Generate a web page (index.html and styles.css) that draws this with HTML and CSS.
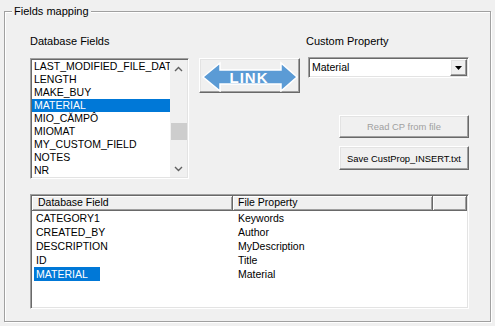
FILE: index.html
```html
<!DOCTYPE html>
<html>
<head>
<meta charset="utf-8">
<title>Fields mapping</title>
<link rel="stylesheet" href="styles.css">
</head>
<body>
<fieldset class="group">
  <legend class="group-title">Fields mapping</legend>
  <div class="group-body">
    <div class="top">
      <div class="col-left">
        <div class="label">Database Fields</div>
        <div class="listbox sunken">
          <ul class="items">
            <li>LAST_MODIFIED_FILE_DATE</li>
            <li>LENGTH</li>
            <li>MAKE_BUY</li>
            <li class="sel">MATERIAL</li>
            <li>MIO_CĂMPÔ</li>
            <li>MIOMAT</li>
            <li>MY_CUSTOM_FIELD</li>
            <li>NOTES</li>
            <li>NR</li>
          </ul>
          <div class="vscroll">
            <div class="sb-arrow"><svg width="9" height="6" viewBox="0 0 9 6"><polyline points="1,5 4.5,1.5 8,5" fill="none" stroke="#606060" stroke-width="1.4"/></svg></div>
            <div class="sb-track"><div class="sb-thumb"></div></div>
            <div class="sb-arrow"><svg width="9" height="6" viewBox="0 0 9 6"><polyline points="1,1 4.5,4.5 8,1" fill="none" stroke="#606060" stroke-width="1.4"/></svg></div>
          </div>
        </div>
      </div>
      <div class="col-mid">
        <button class="link-btn raised" type="button">
          <svg class="link-svg" width="99" height="33" viewBox="1 1 99 33">
            <path d="M4 19 L21 5 L21 12 L82 12 L82 5 L98 19 L82 33 L82 26 L21 26 L21 33 Z" fill="#5b9bd5" stroke="#ffffff" stroke-width="1.5" stroke-linejoin="miter"/>
            <text x="50" y="24.5" text-anchor="middle" class="link-text">LINK</text>
          </svg>
        </button>
      </div>
      <div class="col-right">
        <div class="label">Custom Property</div>
        <div class="combo sunken">
          <span class="combo-text">Material</span>
          <span class="combo-btn raised"><svg width="7" height="4" viewBox="0 0 7 4"><polygon points="0,0 7,0 3.5,4" fill="#000"/></svg></span>
        </div>
        <button class="btn raised btn-read" type="button">Read CP from file</button>
        <button class="btn raised btn-save" type="button">Save CustProp_INSERT.txt</button>
      </div>
    </div>
    <div class="listview sunken">
      <div class="lv-header">
        <div class="lv-h c1">Database Field</div>
        <div class="lv-h c2">File Property</div>
        <div class="lv-h c3"></div>
      </div>
      <div class="lv-rows">
        <div class="lv-row"><span class="c1"><span class="cell">CATEGORY1</span></span><span class="c2">Keywords</span></div>
        <div class="lv-row"><span class="c1"><span class="cell">CREATED_BY</span></span><span class="c2">Author</span></div>
        <div class="lv-row"><span class="c1"><span class="cell">DESCRIPTION</span></span><span class="c2">MyDescription</span></div>
        <div class="lv-row"><span class="c1"><span class="cell">ID</span></span><span class="c2">Title</span></div>
        <div class="lv-row sel"><span class="c1"><span class="cell">MATERIAL</span></span><span class="c2">Material</span></div>
      </div>
    </div>
  </div>
</fieldset>
</body>
</html>
```

FILE: styles.css
```css
html, body {
  margin: 0;
  padding: 0;
}
body {
  background: #f0f0f0;
  font-family: "Liberation Sans", Arial, sans-serif;
  font-size: 11px;
  color: #000;
  width: 495px;
  height: 326px;
  overflow: hidden;
}

.group {
  margin: 4px 0 0 4px;
  padding: 0;
  width: 487px;
  box-sizing: border-box;
  border: 1px solid #a0a0a0;
  box-shadow: inset 1px 1px 0 #fff, 1px 1px 0 #fff;
  min-width: 0;
}
.group-title {
  margin-left: 7px;
  padding: 0 2px;
  line-height: 15px;
  font-size: 11px;
  background: #f0f0f0;
}
.group-body {
  padding: 16px 0 12px 25px;
}

.top {
  display: flex;
  align-items: flex-start;
}
.label {
  line-height: 13px;
  height: 13px;
  white-space: nowrap;
}

.sunken {
  border: 1px solid;
  border-color: #a0a0a0 #fff #fff #a0a0a0;
  box-shadow: inset 1px 1px 0 #696969, inset -1px -1px 0 #e3e3e3;
  padding: 1px;
  background: #fff;
  box-sizing: border-box;
}
.raised {
  border: 1px solid;
  border-color: #fff #696969 #696969 #fff;
  box-shadow: inset -1px -1px 0 #a0a0a0, inset 1px 1px 0 #e3e3e3;
  background: #f0f0f0;
  box-sizing: border-box;
}

/* left list box */
.col-left {
  width: 159px;
}
.listbox {
  margin-top: 10px;
  width: 159px;
  height: 121px;
  display: flex;
}
.items {
  flex: 1;
  margin: 0;
  padding: 0;
  list-style: none;
  overflow: hidden;
  font-size: 10.5px;
}
.items li {
  height: 13px;
  line-height: 13px;
  padding-left: 2px;
  white-space: nowrap;
  overflow: hidden;
}
.items li.sel {
  background: #0078d7;
  color: #fff;
}
.vscroll {
  width: 17px;
  background: #f0f0f0;
  display: flex;
  flex-direction: column;
}
.sb-arrow {
  height: 17px;
  display: flex;
  align-items: center;
  justify-content: center;
}
.sb-track {
  flex: 1;
}
.sb-thumb {
  margin: 46px 0 0 1px;
  height: 17px;
  background: #cdcdcd;
}

/* LINK button */
.col-mid {
  margin-left: 10px;
  padding-top: 23px;
}
.link-btn {
  display: block;
  width: 101px;
  height: 35px;
  padding: 0;
  margin: 0;
}
.link-svg {
  display: block;
}
.link-text {
  font-family: "Liberation Sans", Arial, sans-serif;
  font-weight: bold;
  font-size: 15px;
  letter-spacing: 1px;
  fill: #fff;
}

/* right column */
.col-right {
  margin-left: 6px;
  width: 163px;
}
.combo {
  margin: 9px 0 0 2px;
  width: 161px;
  height: 21px;
  display: flex;
  align-items: stretch;
}
.combo-text {
  flex: 1;
  padding-left: 2px;
  font-size: 10.5px;
  line-height: 17px;
}
.combo-btn {
  width: 17px;
  height: 17px;
  display: flex;
  align-items: center;
  justify-content: center;
}
.btn {
  display: block;
  margin-left: 33px;
  width: 130px;
  padding: 0;
  font-family: "Liberation Sans", Arial, sans-serif;
  font-size: 9.4px;
  color: #000;
  text-align: center;
  white-space: nowrap;
}
.btn-read {
  margin-top: 37px;
  height: 23px;
  color: #a0a0a0;
}
.btn-save {
  margin-top: 8px;
  height: 24px;
}

/* list view */
.listview {
  margin-top: 15px;
  width: 439px;
  height: 115px;
}
.lv-header {
  display: flex;
  height: 15px;
  background: #f0f0f0;
}
.lv-h {
  box-sizing: border-box;
  height: 15px;
  line-height: 13px;
  font-size: 10.5px;
  border-right: 1px solid #696969;
  border-bottom: 1px solid #696969;
  box-shadow: inset 1px 1px 0 #fff, inset -1px -1px 0 #a0a0a0;
  white-space: nowrap;
  overflow: hidden;
}
.lv-h.c1 {
  width: 201px;
  padding-left: 6px;
}
.lv-h.c2 {
  width: 200px;
  padding-left: 5px;
}
.lv-h.c3 {
  flex: 1;
}
.lv-row {
  display: flex;
  height: 14px;
  line-height: 14px;
  font-size: 10.5px;
  white-space: nowrap;
}
.lv-row .c1 {
  width: 201px;
  padding-left: 2px;
  box-sizing: border-box;
}
.lv-row .cell {
  display: inline-block;
  padding: 0 2px;
}
.lv-row.sel .cell {
  background: #0078d7;
  color: #fff;
  padding-right: 12px;
}
.lv-row .c2 {
  padding-left: 5px;
}
```
